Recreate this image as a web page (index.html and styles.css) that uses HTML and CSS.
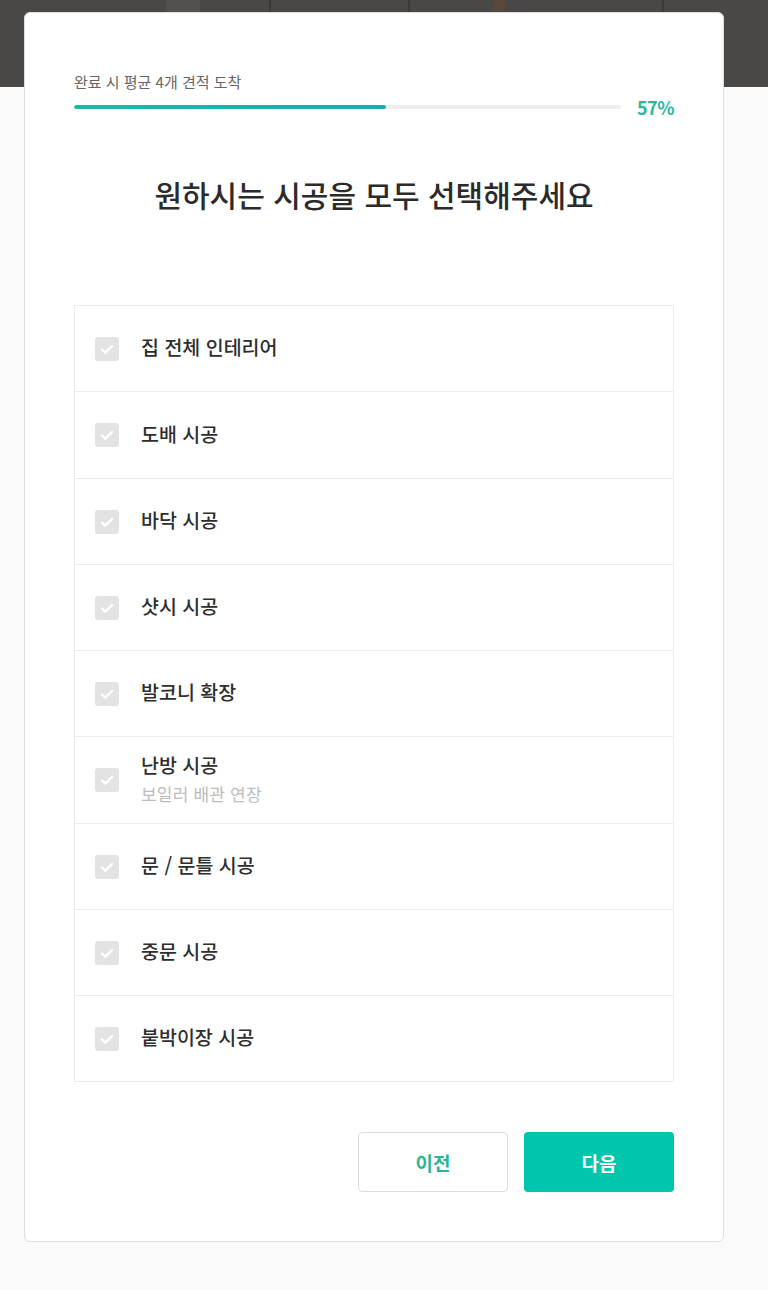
FILE: index.html
```html
<!DOCTYPE html>
<html lang="ko">
<head>
<meta charset="utf-8">
<title>시공 선택</title>
<link rel="stylesheet" href="styles.css">
</head>
<body>
<div class="modal">
  <div class="progress-label">완료 시 평균 4개 견적 도착</div>
  <div class="progress-row">
    <div class="bar"><div class="fill" style="width:57%"></div></div>
    <div class="percent">57%</div>
  </div>
  <h1 class="title">원하시는 시공을 모두 선택해주세요</h1>
  <ul class="options">
    <li class="option"><span class="check"><svg viewBox="0 0 24 24"><path d="M7 12.5l3.3 3.2L17 9"/></svg></span><div class="text"><div class="name">집 전체 인테리어</div></div></li>
    <li class="option tall"><span class="check"><svg viewBox="0 0 24 24"><path d="M7 12.5l3.3 3.2L17 9"/></svg></span><div class="text"><div class="name">도배 시공</div></div></li>
    <li class="option"><span class="check"><svg viewBox="0 0 24 24"><path d="M7 12.5l3.3 3.2L17 9"/></svg></span><div class="text"><div class="name">바닥 시공</div></div></li>
    <li class="option"><span class="check"><svg viewBox="0 0 24 24"><path d="M7 12.5l3.3 3.2L17 9"/></svg></span><div class="text"><div class="name">샷시 시공</div></div></li>
    <li class="option"><span class="check"><svg viewBox="0 0 24 24"><path d="M7 12.5l3.3 3.2L17 9"/></svg></span><div class="text"><div class="name">발코니 확장</div></div></li>
    <li class="option tall"><span class="check"><svg viewBox="0 0 24 24"><path d="M7 12.5l3.3 3.2L17 9"/></svg></span><div class="text"><div class="name">난방 시공</div><div class="sub">보일러 배관 연장</div></div></li>
    <li class="option"><span class="check"><svg viewBox="0 0 24 24"><path d="M7 12.5l3.3 3.2L17 9"/></svg></span><div class="text"><div class="name">문 / 문틀 시공</div></div></li>
    <li class="option"><span class="check"><svg viewBox="0 0 24 24"><path d="M7 12.5l3.3 3.2L17 9"/></svg></span><div class="text"><div class="name">중문 시공</div></div></li>
    <li class="option"><span class="check"><svg viewBox="0 0 24 24"><path d="M7 12.5l3.3 3.2L17 9"/></svg></span><div class="text"><div class="name">붙박이장 시공</div></div></li>
  </ul>
  <div class="actions">
    <button class="btn btn-prev">이전</button>
    <button class="btn btn-next">다음</button>
  </div>
</div>
</body>
</html>
```

FILE: styles.css
```css
* { box-sizing: border-box; }
html, body { margin: 0; padding: 0; }
body {
  font-family: "Noto Sans CJK KR", "Noto Sans", sans-serif;
  color: #333;
  min-height: 1290px;
  background:
    linear-gradient(to right,
      #4a4846 0 166px, #53514f 166px 200px, #4a4846 200px 269px,
      #3c3a38 269px 271px, #4a4846 271px 408px, #3c3a38 408px 410px,
      #4a4846 410px 493px, #57493a 493px 505px, #4a4846 505px 662px,
      #3c3a38 662px 664px, #4a4846 664px) top left / 100% 87px no-repeat,
    #fafafa;
  padding-top: 12px;
}
.modal {
  margin-left: 24px;
  width: 700px;
  background: #fff;
  border: 1px solid #dedede;
  border-radius: 6px;
  padding: 58px 49px 49px;
}
.progress-label {
  font-size: 15px;
  line-height: 22px;
  color: #666;
}
.progress-row {
  display: flex;
  align-items: center;
  margin-top: 3px;
  height: 22px;
}
.bar {
  flex: 1;
  height: 4px;
  background: #eeeeee;
  border-radius: 2px;
  overflow: hidden;
}
.fill {
  height: 100%;
  background: linear-gradient(to right, #19bba6, #12b0b2);
  border-radius: 2px;
}
.percent {
  width: 53px;
  text-align: right;
  font-size: 18px;
  font-weight: 700;
  color: #2ab89f;
  letter-spacing: -0.5px;
}
.title {
  margin: 58px 0 0;
  text-align: center;
  font-size: 30px;
  line-height: 36px;
  font-weight: 500;
  color: #2b2b2b;
}
.options {
  list-style: none;
  margin: 93px 0 0;
  padding: 0;
  border: 1px solid #ececec;
}
.option {
  display: flex;
  align-items: center;
  height: 86px;
  padding-left: 20px;
  border-bottom: 1px solid #ececec;
}
.option.tall { height: 87px; }
.option:last-child { border-bottom: none; height: 85px; }
.check {
  width: 24px;
  height: 24px;
  border-radius: 3px;
  background: #e3e3e3;
  flex: none;
  display: flex;
  align-items: center;
  justify-content: center;
}
.check svg {
  width: 24px;
  height: 24px;
  fill: none;
  stroke: #fff;
  stroke-width: 2.4;
  stroke-linecap: round;
  stroke-linejoin: round;
}
.text { margin-left: 22px; margin-top: -3px; }
.name {
  font-size: 19.5px;
  line-height: 26px;
  font-weight: 500;
  color: #2e2e2e;
}
.sub {
  font-size: 17px;
  line-height: 22px;
  color: #bcbcbc;
  margin-top: 5px;
  letter-spacing: 0.2px;
}
.actions {
  display: flex;
  justify-content: flex-end;
  gap: 16px;
  margin-top: 50px;
}
.btn {
  width: 150px;
  height: 60px;
  border-radius: 4px;
  font-family: "Noto Sans CJK KR", "Noto Sans", sans-serif;
  font-size: 19px;
  font-weight: 700;
  cursor: pointer;
}
.btn-prev {
  background: #fff;
  border: 1px solid #dcdcdc;
  color: #2ab597;
}
.btn-next {
  background: #00c7ab;
  border: none;
  color: #fff;
}
```
